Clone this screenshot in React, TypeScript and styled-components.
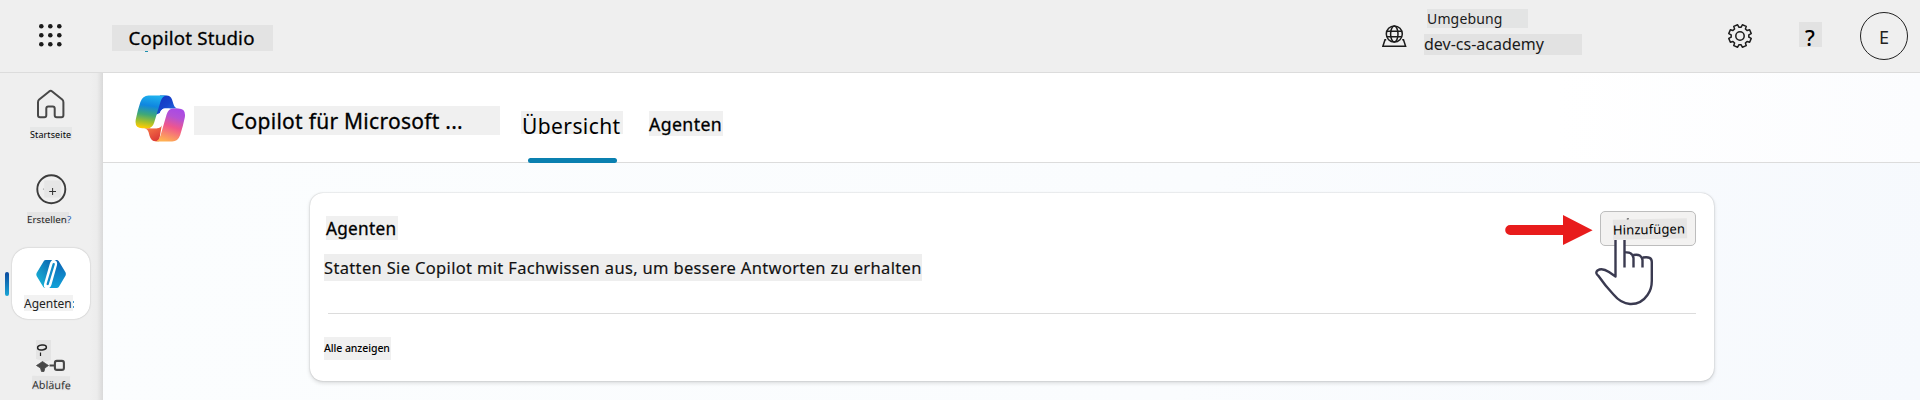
import React from "react";
import styled, { createGlobalStyle } from "styled-components";

const Global = createGlobalStyle`
  * { box-sizing: border-box; }
  body { margin: 0; background: #efefef; overflow: hidden; font-family: "Noto Sans", sans-serif; color: #000; }
  svg { display: block; flex: none; }
`;

const Page = styled.div`
  width: 1920px;
  height: 400px;
  display: flex;
  flex-direction: column;
  overflow: hidden;
`;

const Label = styled.span<{
  $w: number; $h: number; $size: number; $line: number;
  $bg?: string; $indent?: number; $spacing?: number; $weight?: number; $tilt?: number; $color?: string; $stroke?: number;
}>`
  display: block;
  position: relative;
  flex: none;
  width: ${(p) => p.$w}px;
  height: ${(p) => p.$h}px;
  padding-left: ${(p) => p.$indent ?? 0}px;
  background: ${(p) => p.$bg ?? "#f0f0f0"};
  font-size: ${(p) => p.$size}px;
  line-height: ${(p) => p.$line}px;
  letter-spacing: ${(p) => p.$spacing ?? 0}px;
  font-weight: ${(p) => p.$weight ?? 400};
  color: ${(p) => p.$color ?? "#000"};
  -webkit-text-stroke: ${(p) => p.$stroke ?? 0}px currentColor;
  white-space: nowrap;
  transform: rotate(${(p) => p.$tilt ?? 0}deg);
`;

const Speck = styled.i<{ $x: number; $y: number; $w: number; $h: number; $color: string }>`
  position: absolute;
  left: ${(p) => p.$x}px;
  top: ${(p) => p.$y}px;
  width: ${(p) => p.$w}px;
  height: ${(p) => p.$h}px;
  background: ${(p) => p.$color};
`;

const BlueMark = styled.span`
  color: #2a62b8;
`;

const TopBar = styled.header`
  height: 73px;
  flex: none;
  display: flex;
  align-items: flex-start;
  background: #efefef;
  border-bottom: 1px solid #dcdcdc;
`;
const Waffle = styled.div`
  padding: 23px 0 0 38px;
  width: 112px;
`;
const Brand = styled.div`
  padding-top: 25px;
  flex: 1;
`;
const Environment = styled.div`
  display: flex;
  width: 346px;
`;
const GlobeSlot = styled.div`
  width: 42px;
  padding-top: 24px;
`;
const EnvText = styled.div`
  display: flex;
  flex-direction: column;
  gap: 6px;
  padding-top: 9px;
`;
const EnvCaption = styled.div`
  padding-left: 3px;
`;
const TopActions = styled.div`
  display: flex;
  width: 192px;
`;
const GearSlot = styled.div`
  padding-top: 23px;
  width: 72px;
  margin-left: -1px;
`;
const HelpSlot = styled.div`
  padding-top: 22px;
  width: 61px;
`;
const Avatar = styled.div`
  width: 48px;
  height: 48px;
  margin-top: 12px;
  border: 1px solid #222;
  border-radius: 50%;
  font-size: 18px;
  line-height: 48px;
  text-align: center;
  color: #222;
`;

const Body = styled.div`
  display: flex;
  flex: 1;
  min-height: 0;
`;
const Sidebar = styled.nav`
  width: 103px;
  flex: none;
  height: 327px;
  background: linear-gradient(90deg, #efefef 90px, #ececec 97px, #d9d9d9 103px);
  display: flex;
  flex-direction: column;
`;
const NavItem = styled.div<{ $h: number; $top: number; $gap: number; $left: number }>`
  height: ${(p) => p.$h}px;
  flex: none;
  padding: ${(p) => p.$top}px 0 0 ${(p) => p.$left}px;
  display: flex;
  flex-direction: column;
  gap: ${(p) => p.$gap}px;
`;
const IconSlot = styled.div<{ $shift: number }>`
  padding-left: ${(p) => p.$shift}px;
`;
const ActiveRow = styled.div`
  display: flex;
  align-items: center;
  height: 71px;
  flex: none;
  padding-left: 5px;
`;
const ActiveBar = styled.div`
  width: 4px;
  height: 24px;
  border-radius: 2px;
  margin-right: 3px;
  background: linear-gradient(#0b4a9e, #19a5d6);
`;
const ActiveTile = styled.div`
  width: 78px;
  height: 71px;
  border-radius: 16px;
  background: #fff;
  box-shadow: 0 0 1.5px rgba(0, 0, 0, 0.3);
  padding: 12px 0 0 12px;
  display: flex;
  flex-direction: column;
  gap: 6px;
`;

const Main = styled.main`
  flex: 1;
  display: flex;
  flex-direction: column;
  background: linear-gradient(100deg, #fbfdfe, #fafcfe 60%, #f6f9fd);
`;
const PageHeader = styled.div`
  height: 90px;
  flex: none;
  display: flex;
  align-items: flex-start;
  background: linear-gradient(90deg, #fff 80%, #fbfcfe);
  border-bottom: 1px solid #dcdcdc;
  padding-left: 32px;
`;
const LogoSlot = styled.div`
  width: 59px;
  padding-top: 22px;
`;
const TitleSlot = styled.div`
  padding-top: 33px;
  width: 327px;
`;
const Tab = styled.div<{ $w: number }>`
  width: ${(p) => p.$w}px;
  height: 90px;
  padding-top: 38px;
  display: flex;
  flex-direction: column;
  justify-content: space-between;
`;
const TabLine = styled.div`
  width: 89px;
  height: 5px;
  border-radius: 3px;
  margin-left: 7px;
  background: #0a80b0;
`;

const Card = styled.section`
  position: relative;
  width: 1404px;
  height: 188px;
  margin: 30px 0 0 207px;
  border-radius: 13px;
  background: #fff;
  box-shadow: 0 0 1.5px rgba(0, 0, 0, 0.28), 0 2px 4px rgba(0, 0, 0, 0.14);
  padding: 18px 18px 0 14px;
`;
const CardTop = styled.div`
  display: flex;
  justify-content: space-between;
  height: 43px;
  padding-left: 2px;
`;
const CardTitle = styled.div`
  padding-top: 5px;
`;
const AddGroup = styled.div`
  display: flex;
  gap: 7px;
`;
const ArrowSlot = styled.div`
  padding-top: 4px;
`;
const AddButton = styled.button`
  width: 96px;
  height: 35px;
  border: 1px solid #bdbdbd;
  border-radius: 5px;
  background: #f3f2f1;
  padding: 7px 0 0 12px;
  display: flex;
  align-items: flex-start;
  font-family: inherit;
  text-align: left;
`;
const Divider = styled.div`
  height: 1px;
  margin: 32px 0 23px 4px;
  background: #dcdcdc;
`;
const Pointer = styled.div`
  position: absolute;
  left: 1285px;
  top: 47px;
`;

const HomeIcon = () => (
  <svg width="30" height="31" viewBox="0 0 30 31" fill="none" stroke="#484848" strokeWidth="2" strokeLinejoin="round">
    <path d="M13.2 2.4 3.2 10.6Q2 11.6 2 13.2V26.3Q2 28.3 4 28.3H8.3Q10.3 28.3 10.3 26.3V19.6Q10.3 17.6 12.3 17.6H16.7Q18.7 17.6 18.7 19.6V26.3Q18.7 28.3 20.7 28.3H25.4Q27.4 28.3 27.4 26.3V13.2Q27.4 11.6 26.2 10.6L16.2 2.4Q14.7 1.2 13.2 2.4Z" />
  </svg>
);

const CreateIcon = () => (
  <svg width="31" height="31" viewBox="0 0 31 31" fill="none">
    <circle cx="15.3" cy="15.3" r="14" stroke="#3c3c3c" strokeWidth="1.9" />
    <rect x="8.3" y="6.5" width="17" height="17" fill="#e6e6e6" />
    <path d="M13.2 17.5H20M16.6 14V21" stroke="#333" strokeWidth="1" />
    <circle cx="7.5" cy="15" r=".6" fill="#888" />
  </svg>
);

const AgentsIcon = () => (
  <svg width="31" height="29" viewBox="0 0 31 29" fill="none">
    <defs>
      <linearGradient id="agL" x1="0" y1="1" x2=".7" y2="0">
        <stop offset="0" stopColor="#1bc0dd" />
        <stop offset="1" stopColor="#0c6fb5" />
      </linearGradient>
      <linearGradient id="agR" x1="0" y1="0" x2="0" y2="1">
        <stop offset="0" stopColor="#0b62b4" />
        <stop offset="1" stopColor="#12a2d8" />
      </linearGradient>
    </defs>
    <path d="M8 .7Q8.6 0 9.6 0H16.3Q14.8 .8 14 3L8 24Q7.4 27.5 9.5 28Q8 28 7.3 27L.6 16Q0 14.5 .6 13Z" fill="url(#agL)" />
    <path d="M18.5 0H20.4Q22 0 22.8 1.2L29.6 12.6Q30.2 14 29.6 15.4L22.8 27Q22 28 20.6 28H13.2Q14.7 27 15.4 25L21 5Q21.8 1 18.5 0Z" fill="url(#agR)" />
    <path d="M15.5 4Q16.5 .8 18.7 1Q20.8 1.5 20 4.6L14.2 24.4Q13.2 27.3 11 27Q8.8 26.5 9.6 23.6Z" fill="#fff" />
    <path d="M17.7 4.2 11.7 24" stroke="#118bc8" strokeWidth="2.3" strokeLinecap="round" />
  </svg>
);

const FlowIcon = () => (
  <svg width="32" height="34" viewBox="0 0 32 34" fill="none">
    <path d="M0 0H15V20L9 21.5 0 19Z" fill="#e4e4e4" />
    <ellipse cx="6" cy="7.5" rx="4.4" ry="2.4" stroke="#222" strokeWidth="1.5" transform="rotate(-6 6 7.5)" />
    <path d="M4.5 12.5V16" stroke="#222" strokeWidth="1.2" />
    <path d="M.5 25.5Q3 24 6.5 21.5 10 24 12.5 25.5L8.8 28 8 31.5H5.5L4.5 28Z" fill="#484848" stroke="#484848" strokeWidth=".8" strokeLinejoin="round" />
    <path d="M13.5 25.5H18.5" stroke="#484848" strokeWidth="2" />
    <rect x="18.9" y="20.9" width="9" height="9" rx="2" stroke="#484848" strokeWidth="2.1" />
  </svg>
);

const GlobeIcon = () => (
  <svg width="25" height="24" viewBox="0 0 25 24" fill="none" stroke="#1c1c1c" strokeWidth="1.5">
    <circle cx="12.3" cy="10" r="8" />
    <ellipse cx="12.3" cy="10" rx="3.7" ry="8" />
    <path d="M5 7.2H19.6M5 12.8H19.6" />
    <path d="M4.2 15.8H3L.9 22.2H23.6L21.5 15.8H20.2" />
  </svg>
);

const gearPath = () => {
  const pts: string[] = [];
  for (let i = 0; i < 8; i++) {
    const c = (i + 0.5) * 45;
    [[-15, 8.9], [-10.5, 11.5], [10.5, 11.5], [15, 8.9]].forEach(([d, r]) => {
      const a = ((c + d) * Math.PI) / 180;
      pts.push(`${(13 + r * Math.cos(a)).toFixed(2)} ${(13 + r * Math.sin(a)).toFixed(2)}`);
    });
  }
  return `M${pts.join("L")}Z`;
};
const GearIcon = () => (
  <svg width="26" height="26" viewBox="0 0 26 26" fill="none" stroke="#1c1c1c" strokeWidth="1.5" strokeLinejoin="round">
    <path d={gearPath()} />
    <circle cx="13" cy="13" r="4.2" />
  </svg>
);

const WaffleIcon = () => (
  <svg width="26" height="26" viewBox="0 0 26 26" fill="#1b1b1b">
    {[3.2, 12.2, 21.2].map((y) => [3.3, 12.3, 21.3].map((x) => <circle key={`${x}-${y}`} cx={x} cy={y} r="2.3" />))}
  </svg>
);

const CopilotLogo = () => (
  <svg width="51" height="48" viewBox="0 0 51 48" fill="none">
    <defs>
      <linearGradient id="cpA" x1=".55" y1="0" x2=".4" y2="1">
        <stop offset="0" stopColor="#1fb1ee" />
        <stop offset=".32" stopColor="#0f86e0" />
        <stop offset=".6" stopColor="#3fa878" />
        <stop offset=".82" stopColor="#a4c02c" />
        <stop offset="1" stopColor="#fccb05" />
      </linearGradient>
      <linearGradient id="cpB" x1=".7" y1="0" x2=".4" y2="1">
        <stop offset="0" stopColor="#a84ae6" />
        <stop offset=".25" stopColor="#b552d4" />
        <stop offset=".55" stopColor="#f0568c" />
        <stop offset="1" stopColor="#ffb052" />
      </linearGradient>
      <linearGradient id="cpC" x1="0" y1="0" x2="1" y2="1">
        <stop offset="0" stopColor="#1433c0" />
        <stop offset=".5" stopColor="#1646cc" />
        <stop offset="1" stopColor="#2a85ea" />
      </linearGradient>
      <linearGradient id="cpD" x1="0" y1="0" x2=".6" y2="1">
        <stop offset="0" stopColor="#ff8a4c" />
        <stop offset="1" stopColor="#dc3a37" />
      </linearGradient>
    </defs>
    <path d="M25 .5H31.5Q35.6 .5 37 4.5L38.6 9.5Q39.8 13.3 43.5 13.5H30Q26.6 13.6 25 18L20 20Z" fill="url(#cpC)" />
    <path d="M12 33.2H22L27 29 24 46.3H20.5Q16.2 46.3 14.6 41L13.6 37.3Q12.6 33.8 9 33.3Z" fill="url(#cpD)" />
    <path d="M13.5 .5H32Q27.4 .5 25.5 6.8L19.2 27.5Q17.4 33.3 12.5 33.3H7.2Q-.8 33.3 .8 24.3Q2.6 15.2 5.4 7Q7.7 .5 13.5 .5Z" fill="url(#cpA)" />
    <path d="M37.2 46.4H19.6Q23.8 46.2 25.6 40.3L31.6 19.5Q33.3 13.5 38.2 13.5H43.2Q51.3 13.5 49.8 22.6Q48 31.5 45.2 39.9Q43 46.4 37.2 46.4Z" fill="url(#cpB)" />
    <path d="M35.5 13.5H29.8Q26.4 13.6 24.8 18L21.4 27.5Q19.4 33.3 14.3 33.3H22Q26 33.2 27.5 29.5L30.8 18.6Q32.3 13.8 35.5 13.5Z" fill="#fff" />
  </svg>
);

const ArrowIcon = () => (
  <svg width="88" height="31" viewBox="0 0 88 31" fill="#e81c1c">
    <path d="M5.2 10H58V0L87.6 15.2 58 30V20H5.2A5 5 0 0 1 5.2 10Z" />
  </svg>
);

const HandIcon = () => (
  <svg width="60" height="68" viewBox="0 0 60 68" fill="none">
    <path d="M21 0H29.2V13Q37 11 38.5 16Q46 14 47.5 18.5Q54 16.5 57 20.5V45Q55 64 38 64.5Q28 64.5 17 52L2 34Q1 30 8 29.5Q13 31 21 36Z" fill="#fff" />
    <path d="M20.5 0V36.5L14 32Q7 27.5 2.5 30.5Q-.3 33 3.5 36Q10 45.5 18.5 54.5Q26 63.5 35 64Q46 64.5 52.5 55Q57 49 56.8 40V22Q56.8 16 48 17.5M29.5 0V27.5M29.5 12.5Q37.5 11.5 38.5 18V27.5M38.5 15Q46.5 13.5 47.5 20V27.5" stroke="#3a3a50" strokeWidth="2.4" strokeLinejoin="round" />
  </svg>
);

export default function App() {
  return (
    <Page>
      <Global />
      <TopBar>
        <Waffle><WaffleIcon /></Waffle>
        <Brand>
          <Label $w={161} $h={26} $size={18.7} $line={26} $bg="#e3e3e3" $indent={16.5} $spacing={0.2} $stroke={0.3}>
            Copilot Studio
            <Speck $x={33} $y={26} $w={3} $h={1} $color="#1c8fae" />
          </Label>
        </Brand>
        <Environment>
          <GlobeSlot><GlobeIcon /></GlobeSlot>
          <EnvText>
            <EnvCaption>
              <Label $w={101} $h={19} $size={14} $line={19} $bg="#e3e4e4" $spacing={0.15} $color="#1a1a1a">Umgebung</Label>
            </EnvCaption>
            <Label $w={158} $h={21} $size={16} $line={20} $bg="#e2e2e2" $color="#1a1a1a">dev-cs-academy</Label>
          </EnvText>
        </Environment>
        <TopActions>
          <GearSlot><GearIcon /></GearSlot>
          <HelpSlot>
            <Label $w={23} $h={25} $size={22} $line={30} $bg="#e2e2e2" $indent={6} $weight={500}>?</Label>
          </HelpSlot>
          <Avatar>E</Avatar>
        </TopActions>
      </TopBar>
      <Body>
        <Sidebar>
          <NavItem $h={86} $top={16} $gap={7} $left={30}>
            <IconSlot $shift={6}><HomeIcon /></IconSlot>
            <Label $w={42} $h={13} $size={9} $line={15} $bg="#e6e7e7" $spacing={0.1}>Startseite</Label>
          </NavItem>
          <NavItem $h={89} $top={15} $gap={7} $left={27}>
            <IconSlot $shift={9}><CreateIcon /></IconSlot>
            <Label $w={42} $h={12} $size={9.8} $line={15} $bg="#e4e4e4" $color="#222">Erstellen<BlueMark>?</BlueMark></Label>
          </NavItem>
          <ActiveRow>
            <ActiveBar />
            <ActiveTile>
              <IconSlot $shift={12}><AgentsIcon /></IconSlot>
              <Label $w={49} $h={16} $size={12} $line={17} $bg="#f2f2f2" $color="#222">
                Agenten
                <Speck $x={49} $y={6} $w={1} $h={2} $color="#4a9fd0" />
                <Speck $x={49} $y={11} $w={1} $h={2} $color="#4a9fd0" />
              </Label>
            </ActiveTile>
          </ActiveRow>
          <NavItem $h={81} $top={21} $gap={2} $left={32}>
            <IconSlot $shift={4}><FlowIcon /></IconSlot>
            <Label $w={38} $h={14} $size={10.8} $line={17} $bg="#e5e5e5" $tilt={1} $color="#333">Abläufe</Label>
          </NavItem>
        </Sidebar>
        <Main>
          <PageHeader>
            <LogoSlot><CopilotLogo /></LogoSlot>
            <TitleSlot>
              <Label $w={306} $h={29} $size={21} $line={30} $indent={37} $spacing={0.27} $stroke={0.3}>Copilot für Microsoft ...</Label>
            </TitleSlot>
            <Tab $w={128}>
              <Label $w={102} $h={23} $size={21} $line={30} $indent={1} $spacing={0.4}>Übersicht</Label>
              <TabLine />
            </Tab>
            <Tab $w={80}>
              <Label $w={74} $h={25} $size={17.7} $line={26} $spacing={0.4} $stroke={0.3}>Agenten</Label>
            </Tab>
          </PageHeader>
          <Card>
            <CardTop>
              <CardTitle>
                <Label $w={72} $h={24} $size={17.2} $line={25} $spacing={0.28} $stroke={0.3}>Agenten</Label>
              </CardTitle>
              <AddGroup>
                <ArrowSlot><ArrowIcon /></ArrowSlot>
                <AddButton>
                  <Label $w={74} $h={20} $size={13} $line={21} $bg="#e6e5e4" $tilt={-1} $spacing={0.1}>
                    Hinzufügen
                    <Speck $x={14} $y={-1} $w={2} $h={1} $color="#333" />
                  </Label>
                </AddButton>
              </AddGroup>
            </CardTop>
            <Label $w={598} $h={27} $size={16.5} $line={27} $bg="#eee" $spacing={0.34} $stroke={0.15} $color="#111">Statten Sie Copilot mit Fachwissen aus, um bessere Antworten zu erhalten</Label>
            <Divider />
            <Label $w={67} $h={23} $size={10.5} $line={23} $weight={500} $spacing={-0.08}>Alle anzeigen</Label>
            <Pointer><HandIcon /></Pointer>
          </Card>
        </Main>
      </Body>
    </Page>
  );
}
